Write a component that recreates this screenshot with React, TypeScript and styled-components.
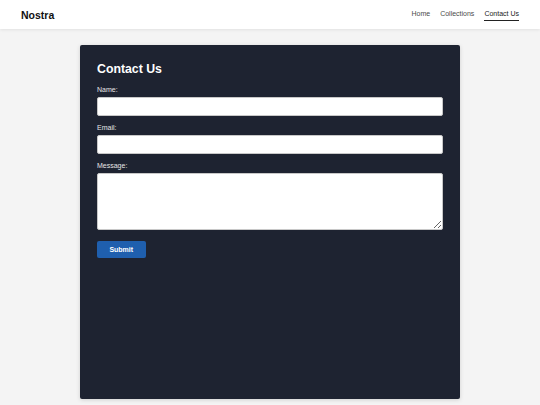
import styled, { createGlobalStyle } from 'styled-components';

const GlobalStyle = createGlobalStyle`
  html, body {
    margin: 0;
    padding: 0;
    background: #f4f4f4;
    font-family: 'Liberation Sans', Arial, sans-serif;
  }

  * {
    box-sizing: border-box;
  }
`;

const Header = styled.header`
  height: 29px;
  padding: 0 21px;
  display: flex;
  align-items: center;
  justify-content: space-between;
  background: #ffffff;
  box-shadow: 0 1px 3px rgba(0, 0, 0, 0.08);
`;

const Logo = styled.div`
  font-size: 10.5px;
  font-weight: 700;
  color: #111;
`;

const Nav = styled.nav`
  display: flex;
  gap: 10px;
`;

const NavLink = styled.a<{ $active?: boolean }>`
  font-size: 7px;
  line-height: 8px;
  color: ${p => (p.$active ? '#1a1a1a' : '#4a4a4a')};
  text-decoration: none;
  padding-bottom: 2px;
  border-bottom: 1px solid ${p => (p.$active ? '#222' : 'transparent')};
  margin-top: 1px;
`;

const Main = styled.main`
  padding: 16px 0 6px;
`;

const Card = styled.section`
  width: 380px;
  min-height: 354px;
  margin: 0 auto;
  padding: 17px;
  background: #1e2331;
  border-radius: 2px;
  box-shadow: 0 1px 4px rgba(0, 0, 0, 0.15);
  color: #fff;
`;

const Title = styled.h2`
  margin: 0 0 9px;
  font-size: 12.3px;
  font-weight: 700;
  line-height: 15px;
`;

const Form = styled.form`
  display: flex;
  flex-direction: column;
`;

const Label = styled.label`
  font-size: 7px;
  line-height: 8px;
  color: #e6e6e6;
  margin-bottom: 3px;
`;

const Input = styled.input`
  height: 19px;
  margin-bottom: 8px;
  border: 1px solid #c8c8c8;
  border-radius: 2px;
  background: #fff;
  font: inherit;
`;

const TextArea = styled.textarea`
  height: 57px;
  margin: 0 0 10.5px;
  border: 1px solid #c8c8c8;
  border-radius: 2px;
  background: #fff;
  font: inherit;
  resize: vertical;
`;

const SubmitButton = styled.button`
  align-self: flex-start;
  width: 48.5px;
  height: 17.5px;
  padding: 0;
  border: none;
  border-radius: 2px;
  background: #1f5fae;
  color: #fff;
  font-family: inherit;
  font-size: 7px;
  font-weight: 700;
  cursor: pointer;
`;

export default function App() {
  return (
    <>
      <GlobalStyle />
      <Header>
        <Logo>Nostra</Logo>
        <Nav>
          <NavLink href="#">Home</NavLink>
          <NavLink href="#">Collections</NavLink>
          <NavLink href="#" $active>
            Contact Us
          </NavLink>
        </Nav>
      </Header>
      <Main>
        <Card>
          <Title>Contact Us</Title>
          <Form onSubmit={e => e.preventDefault()}>
            <Label htmlFor="name">Name:</Label>
            <Input id="name" type="text" />
            <Label htmlFor="email">Email:</Label>
            <Input id="email" type="email" />
            <Label htmlFor="message">Message:</Label>
            <TextArea id="message" />
            <SubmitButton type="submit">Submit</SubmitButton>
          </Form>
        </Card>
      </Main>
    </>
  );
}
